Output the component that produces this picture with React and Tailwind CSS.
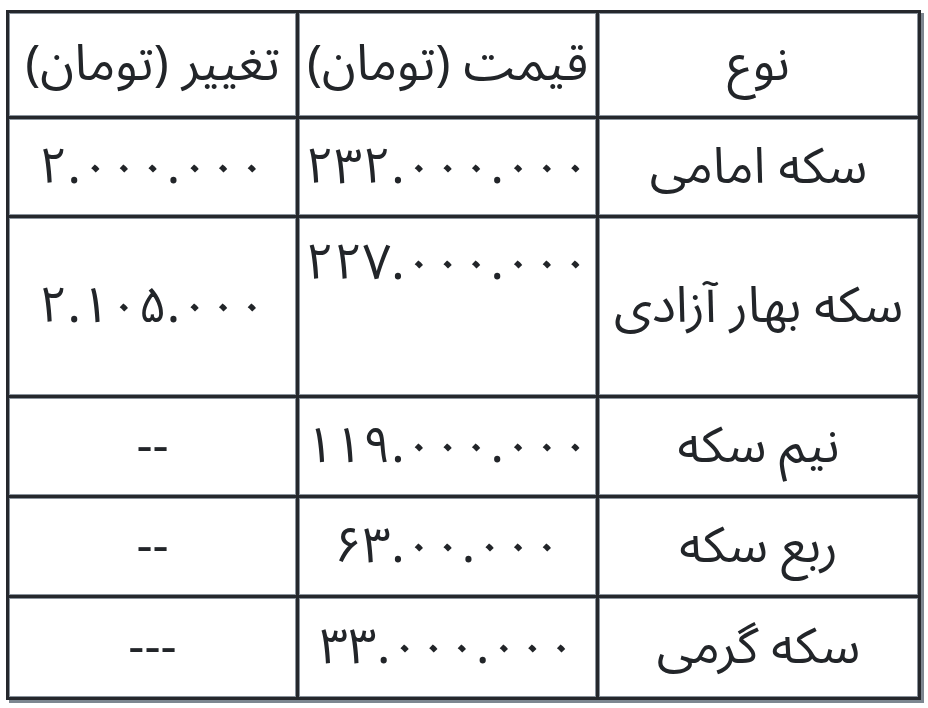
import React from 'react';

const rows = [
  { name: 'سکه امامی', price: '۲۳۲.۰۰۰.۰۰۰', change: '۲.۰۰۰.۰۰۰', h: 'h-[99px]' },
  { name: 'سکه بهار آزادی', price: '۲۲۷.۰۰۰.۰۰۰', change: '۲.۱۰۵.۰۰۰', h: 'h-[180px]', top: true },
  { name: 'نیم سکه', price: '۱۱۹.۰۰۰.۰۰۰', change: '--', h: 'h-[100px]' },
  { name: 'ربع سکه', price: '۶۳.۰۰.۰۰۰', change: '--', h: 'h-[100px]' },
  { name: 'سکه گرمی', price: '۳۳.۰۰۰.۰۰۰', change: '---', h: 'h-[102px]' },
];

const cell =
  'border-[3px] border-[#25282c] text-center align-middle p-0 shadow-[inset_0_0_0_1px_#8a939c]';

export default function App() {
  return (
    <div className="bg-white w-[928px] h-[708px] pt-[10px] pl-[6px]">
      <table
        dir="rtl"
        className="table-fixed border-collapse w-[912px] text-[50px] leading-[1.5] text-[#222529] shadow-[3px_3px_0_#7d8690]"
        style={{ fontFamily: '"Noto Sans Arabic", "Noto Sans", sans-serif' }}
      >
        <colgroup>
          <col className="w-[322px]" />
          <col className="w-[300px]" />
          <col className="w-[290px]" />
        </colgroup>
        <thead>
          <tr className="h-[106px]">
            <th className={`${cell} font-normal`}>نوع</th>
            <th className={`${cell} font-normal whitespace-nowrap`}>قیمت (تومان)</th>
            <th className={`${cell} font-normal whitespace-nowrap`}>تغییر (تومان)</th>
          </tr>
        </thead>
        <tbody>
          {rows.map((r) => (
            <tr key={r.name} className={r.h}>
              <td className={`${cell} whitespace-nowrap`}>{r.name}</td>
              <td className={r.top ? `${cell} !align-top pt-[8px]` : cell}>{r.price}</td>
              <td className={cell}>{r.change}</td>
            </tr>
          ))}
        </tbody>
      </table>
    </div>
  );
}
